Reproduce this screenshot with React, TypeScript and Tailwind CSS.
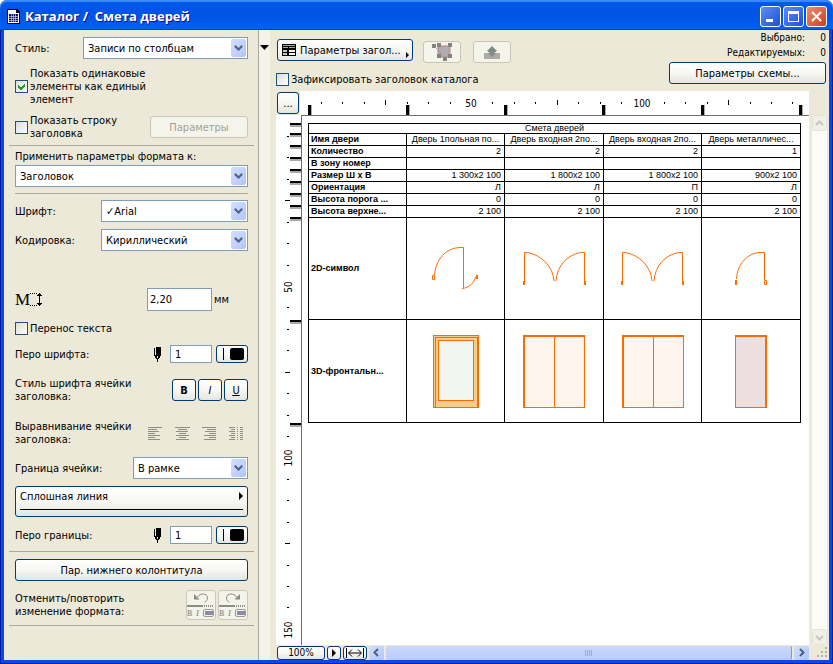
import React from 'react';
import clsx from 'clsx';

const PUSH =
  'rounded-[3px] border border-[#003c74] bg-linear-to-b from-white via-[#f7f7f4] to-[#e6e5dc] text-black';
const PUSH_OFF = 'rounded-[3px] border border-[#c9c7ba] bg-[#f5f4ea] text-[#a1a192]';
const FIELD = 'border border-[#7f9db9] bg-white text-black outline-none';

interface SelectProps {
  id: string;
  options: string[];
  className: string;
}

const Select: React.FC<SelectProps> = ({ id, options, className }) => (
  <div className={clsx('grid', className)}>
    <select
      id={id}
      className={clsx(FIELD, 'col-start-1 row-start-1 h-[22px] w-full appearance-none pl-1 pr-5')}
    >
      {options.map((o) => (
        <option key={o}>{o}</option>
      ))}
    </select>
    <span className="pointer-events-none col-start-1 row-start-1 mr-0.5 flex h-[18px] w-[15px] items-center justify-center self-center justify-self-end rounded-[2px] bg-linear-to-br from-[#d3dffd] to-[#b0c5f8]">
      <svg width="9" height="6" viewBox="0 0 9 6" fill="none" stroke="#4d6185" strokeWidth="2">
        <path d="M0.8 0.8 4.5 4.5 8.2 0.8" />
      </svg>
    </span>
  </div>
);

interface CheckProps {
  checked?: boolean;
  children: React.ReactNode;
  className?: string;
}

const Check: React.FC<CheckProps> = ({ checked, children, className }) => (
  <label className={clsx('flex items-center gap-0.5', className)}>
    <span className="grid shrink-0">
      <input
        type="checkbox"
        defaultChecked={checked}
        className="peer col-start-1 row-start-1 size-[13px] appearance-none border border-[#1c5180] bg-linear-to-br from-[#dcdcd7] to-white"
      />
      <svg
        className="pointer-events-none invisible col-start-1 row-start-1 peer-checked:visible"
        width="13"
        height="13"
        viewBox="0 0 13 13"
        shapeRendering="crispEdges"
      >
        <path d="M3 5v3l2 2h1l4-4V3L5.5 7.5z" fill="#21a121" />
      </svg>
    </span>
    <span>{children}</span>
  </label>
);

const PenIcon = () => (
  <svg width="9" height="15" viewBox="0 0 9 15" shapeRendering="crispEdges">
    <path d="M1 1h1v7h1V0h5v9H7v2H6v1H5v3H4v-3H3v-1H2V9H1z" fill="#000" />
    <path d="M4 9h1v2H4z" fill="#ece9d8" />
  </svg>
);

const PenRow: React.FC<{ id: string; label: string }> = ({ id, label }) => (
  <div className="flex items-center">
    <label htmlFor={id} className="flex-1">
      {label}
    </label>
    <PenIcon />
    <input id={id} defaultValue="1" className={clsx(FIELD, 'ml-2 h-[18px] w-[42px] pl-1')} />
    <button className={clsx(PUSH, 'ml-1 flex h-[18px] w-8 items-center gap-1.5 pl-1.5')} aria-label="Цвет пера">
      <span className="h-3 w-px bg-black" />
      <span className="h-3 w-3.5 rounded-[2px] bg-black" />
    </button>
  </div>
);

const ALIGN_ICONS = [
  'M0 .5h14M0 2.5h9M0 4.5h11M0 6.5h7M0 8.5h12M0 10.5h7M0 12.5h12',
  'M0 .5h15M3 2.5h9M1 4.5h12M4 6.5h7M1 8.5h13M4 10.5h7M1 12.5h13',
  'M0 .5h14M5 2.5h9M3 4.5h11M7 6.5h7M2 8.5h12M7 10.5h7M2 12.5h12',
  'M0 .5h6M8 .5h1M11 .5h3M2 2.5h4M8 2.5h1M11 2.5h3M0 4.5h6M8 4.5h1M11 4.5h3M2 6.5h4M8 6.5h1M11 6.5h3M0 8.5h6M8 8.5h1M11 8.5h3M2 10.5h4M8 10.5h1M11 10.5h3M0 12.5h6M8 12.5h1M11 12.5h3',
];
const ALIGN_LABELS = ['По левому краю', 'По центру', 'По правому краю', 'По ширине'];

const HistoryIcon: React.FC<{ redo?: boolean }> = ({ redo }) => (
  <svg width="28" height="28" viewBox="0 0 28 28" fill="none">
    <g transform={redo ? 'translate(28 0) scale(-1 1)' : undefined}>
      <path d="M10 6.5C13 1.5 20.5 2 20.5 7c0 2-1 3.500-3 4" stroke="#8c8c86" />
      <path d="M7 3v5.500h5.500z" fill="#8c8c86" />
    </g>
    <path d="M0 15h15" stroke="#8c8c86" strokeWidth="2" />
    <path d="M15 15h12" stroke="#8c8c86" strokeWidth="2" strokeDasharray="1 1" />
    <text x="0" y="25" fontSize="8" fontWeight="bold" fill="#9b9b94" fontFamily="Liberation Serif, serif">
      B
    </text>
    <text x="9" y="25" fontSize="8" fontWeight="bold" fontStyle="italic" fill="#9b9b94" fontFamily="Liberation Serif, serif">
      I
    </text>
    <rect x="16.5" y="18.5" width="10" height="7" rx="1.5" stroke="#9b9b94" />
    <rect x="18" y="20" width="8" height="4" fill="#8a8ab0" />
  </svg>
);

const Rule: React.FC<{ className?: string }> = ({ className }) => (
  <hr className={clsx('border-[#aca899]', className)} />
);

const FormatPanel = () => (
  <aside className="w-[254px] shrink-0 pl-[11px] pr-2.5">
    <div className="flex items-center justify-between pt-[7px]">
      <label htmlFor="style">Стиль:</label>
      <Select id="style" options={['Записи по столбцам']} className="w-[165px]" />
    </div>
    <Check checked className="mt-2 w-[150px]">
      Показать одинаковые элементы как единый элемент
    </Check>
    <div className="mt-2 flex items-center justify-between">
      <Check className="w-[120px]">Показать строку заголовка</Check>
      <button disabled className={clsx(PUSH_OFF, 'h-[22px] w-[98px]')}>
        Параметры
      </button>
    </div>
    <Rule className="-ml-1.5 -mr-1.5 mt-[5px]" />

    <label htmlFor="target" className="mt-1 block">
      Применить параметры формата к:
    </label>
    <Select id="target" options={['Заголовок']} className="mt-0.5 w-full" />
    <Rule className="mt-1.5" />

    <div className="mt-1.5 flex items-center justify-between">
      <label htmlFor="font">Шрифт:</label>
      <Select id="font" options={['✓Arial']} className="w-[147px]" />
    </div>
    <div className="mt-[7px] flex items-center justify-between">
      <label htmlFor="enc">Кодировка:</label>
      <Select id="enc" options={['Кириллический']} className="w-[147px]" />
    </div>

    <div className="mt-[37px] flex items-center">
      <span className="font-['Liberation_Serif',serif] text-[17px] leading-5">M</span>
      <svg width="12" height="13" viewBox="0 0 12 13" shapeRendering="crispEdges">
        <path d="M0 .5h7M0 12.5h7" stroke="#000" strokeDasharray="1 1" />
        <path d="M9 0h1v1h1v1h1v1h-2v7h2v1h-1v1h-1v1H9v-1H8v-1H7v-1h2V3H7V2h1V1h1z" fill="#000" />
      </svg>
      <input aria-label="Высота шрифта" defaultValue="2,20" className={clsx(FIELD, 'ml-auto h-[23px] w-[65px] pl-0.5')} />
      <span className="w-9 pl-0.5">мм</span>
    </div>
    <Check className="mt-[11px]">Перенос текста</Check>
    <div className="mt-2.5">
      <PenRow id="fontpen" label="Перо шрифта:" />
    </div>

    <div className="mt-3.5 flex items-center justify-between">
      <span className="w-[130px]">Стиль шрифта ячейки заголовка:</span>
      <div className="flex gap-0.5">
        <button className={clsx(PUSH, 'h-[22px] w-6 font-bold')}>B</button>
        <button className={clsx(PUSH, 'h-[22px] w-6 italic')}>I</button>
        <button className={clsx(PUSH, 'h-[22px] w-6 underline')}>U</button>
      </div>
    </div>

    <div className="mt-[17px] flex items-center justify-between">
      <span className="w-[130px]">Выравнивание ячейки заголовка:</span>
      <div className="flex gap-3 pr-1">
        {ALIGN_ICONS.map((d, i) => (
          <button key={d} disabled aria-label={ALIGN_LABELS[i]}>
            <svg width="15" height="13" viewBox="0 0 15 13" stroke="#8f8e85" shapeRendering="crispEdges">
              <path d={d} />
            </svg>
          </button>
        ))}
      </div>
    </div>

    <div className="mt-[11px] flex items-center justify-between">
      <label htmlFor="border">Граница ячейки:</label>
      <Select id="border" options={['В рамке']} className="w-[115px]" />
    </div>
    <button className={clsx(PUSH, 'mt-[7px] block h-[31px] w-full px-1')}>
      <span className="flex items-center justify-between">
        Сплошная линия
        <svg width="4" height="8" viewBox="0 0 4 8">
          <path d="M0 0 4 4 0 8z" />
        </svg>
      </span>
      <span className="mb-1 mt-1.5 block h-px bg-black" />
    </button>
    <div className="mt-[9px]">
      <PenRow id="borderpen" label="Перо границы:" />
    </div>
    <Rule className="-ml-1.5 -mr-1.5 mt-[7px]" />

    <button className={clsx(PUSH, 'mt-[7px] h-[22px] w-full')}>Пар. нижнего колонтитула</button>
    <div className="mt-[9px] flex items-center justify-between">
      <span className="w-[130px]">Отменить/повторить изменение формата:</span>
      <div className="flex gap-0.5">
        <button disabled aria-label="Отменить" className={PUSH_OFF}>
          <HistoryIcon />
        </button>
        <button disabled aria-label="Повторить" className={PUSH_OFF}>
          <HistoryIcon redo />
        </button>
      </div>
    </div>
    <Rule className="-ml-1.5 -mr-1.5 mt-[5px]" />
  </aside>
);

const ORANGE = '#ff6a00';

const SinglePlan = () => (
  <svg width="47" height="43" viewBox="0 0 47 43" fill="none" stroke={ORANGE}>
    <path d="M.5 28.5h2v4h-2zM2.5 28C4 12 14 1 28 .5h3.5v40.500M30 41.5C37 41 42 36 43.5 30" />
    <path d="M45 28v4" strokeWidth="2" />
  </svg>
);

const DoublePlan = () => (
  <svg width="63" height="33" viewBox="0 0 63 33" fill="none" stroke={ORANGE}>
    <path d="M1.5 30V.5h3C18 3 30 14 31 29M61.5 30V.5h-4C44 3 34 14 33 29" />
    <path d="M1 29v4M62 29v4" strokeWidth="2" />
  </svg>
);

const MetalPlan = () => (
  <svg width="32" height="33" viewBox="0 0 32 33" fill="none" stroke={ORANGE}>
    <path d="M1.5 27C2 13 12 1 25 .5h4.5V28M29.5 28.5h2v4h-2z" />
    <path d="M1 28v5" strokeWidth="2" />
  </svg>
);

const WindowFront = () => (
  <svg width="46" height="73" viewBox="0 0 46 73" stroke={ORANGE} shapeRendering="crispEdges">
    <rect x=".5" y=".5" width="45" height="72" fill="#f5cd8a" />
    <path d="M2.5 72V2.5h42V72" fill="none" />
    <rect x="5.5" y="5.5" width="35" height="60" fill="#f0f5f0" />
  </svg>
);

const DoubleFront = () => (
  <svg width="62" height="73" viewBox="0 0 62 73" stroke={ORANGE} shapeRendering="crispEdges">
    <rect x=".5" y=".5" width="61" height="72" fill="#fff5ef" />
    <path d="M0 1.5h62M1.5 0v73M31.5 0v73" />
  </svg>
);

const MetalFront = () => (
  <svg width="32" height="73" viewBox="0 0 32 73" stroke={ORANGE} shapeRendering="crispEdges">
    <rect x=".5" y=".5" width="31" height="72" fill="#ebe0df" />
    <path d="M0 1.5h32M30.5 0v73" />
  </svg>
);

const ROWS = [
  ['Количество', '2', '2', '2', '1'],
  ['В зону номер', '', '', '', ''],
  ['Размер Ш x В', '1 300x2 100', '1 800x2 100', '1 800x2 100', '900x2 100'],
  ['Ориентация', 'Л', 'Л', 'П', 'Л'],
  ['Высота порога ...', '0', '0', '0', '0'],
  ['Высота верхне...', '2 100', '2 100', '2 100', '2 100'],
];
const DOORS = ['Дверь 1польная по...', 'Дверь входная 2по...', 'Дверь входная 2по...', 'Дверь металличес...'];
const PLANS = [SinglePlan, DoublePlan, DoublePlan, MetalPlan];
const FRONTS = [WindowFront, DoubleFront, DoubleFront, MetalFront];

const TH = 'border border-black p-0 pl-0.5 text-left font-bold whitespace-nowrap';
const TD = 'border border-black p-0 pr-[3px] text-right whitespace-nowrap';

const Schedule = () => (
  <table className="w-[493px] table-fixed border-collapse font-['Liberation_Sans',sans-serif] text-[9px] leading-[11px]">
    <colgroup>
      <col className="w-[98px]" />
      <col className="w-[98px]" />
      <col className="w-[99px]" />
      <col className="w-[98px]" />
      <col />
    </colgroup>
    <thead>
      <tr>
        <th colSpan={5} className="border border-black p-0 text-center leading-[9px] font-normal">
          Смета дверей
        </th>
      </tr>
      <tr>
        <th className={TH}>Имя двери</th>
        {DOORS.map((d, i) => (
          <th key={i} className="border border-black p-0 text-center font-normal whitespace-nowrap">
            {d}
          </th>
        ))}
      </tr>
    </thead>
    <tbody>
      {ROWS.map(([name, ...values]) => (
        <tr key={name} className="h-3">
          <th className={TH}>{name}</th>
          {values.map((v, i) => (
            <td key={i} className={TD}>
              {v}
            </td>
          ))}
        </tr>
      ))}
      <tr className="h-[102px]">
        <th className={TH}>2D-символ</th>
        {PLANS.map((Plan, i) => (
          <td key={i} className="border border-black p-0">
            <div className="flex justify-center">
              <Plan />
            </div>
          </td>
        ))}
      </tr>
      <tr className="h-[103px]">
        <th className={TH}>3D-фронтальн...</th>
        {FRONTS.map((Front, i) => (
          <td key={i} className="border border-black p-0">
            <div className="flex justify-center">
              <Front />
            </div>
          </td>
        ))}
      </tr>
    </tbody>
  </table>
);

// one tick per 6.25 units, a number on every 8th, a longer tick half way between
const ticks = (first: number, count: number, offset: number) =>
  Array.from({ length: count }, (_, i) => {
    const n = i + offset;
    return { pos: Math.round(first + i * 21.43), long: n % 8 === 4, num: n % 8 === 0 ? (n / 8) * 50 : 0 };
  });

const COL_MARKS = [9, 107, 205, 303, 402, 500];
const ROW_MARKS = [8, 18, 30, 42, 54, 66, 78, 90, 102, 205, 308];

const RulerX = () => (
  <svg width="509" height="24" shapeRendering="crispEdges" fontSize="10" textAnchor="middle" className="block">
    {ticks(21, 23, 1).map((t) =>
      t.num ? (
        <text key={t.pos} x={t.pos} y="16">
          {t.num}
        </text>
      ) : (
        <rect key={t.pos} x={t.pos} y={t.long ? 9 : 11} width="1" height={t.long ? 5 : 2} />
      ),
    )}
    {COL_MARKS.map((x) => (
      <g key={x}>
        <rect x={x} y="14" width="3" height="10" fill="#aaa" />
        <rect x={x - 1} y="14" width="3" height="10" />
      </g>
    ))}
  </svg>
);

const RulerY = () => (
  <svg width="25" height="525" shapeRendering="crispEdges" fontSize="10" textAnchor="middle" className="block">
    {ticks(21, 24, 1).map((t) =>
      t.num ? (
        <text key={t.pos} transform={`translate(16 ${t.pos + 1}) rotate(-90)`}>
          {t.num}
        </text>
      ) : (
        <rect key={t.pos} x={t.long ? 9 : 11} y={t.pos} width={t.long ? 5 : 2} height="1" />
      ),
    )}
    {ROW_MARKS.map((y) => (
      <g key={y}>
        <rect x="14" y={y + 2} width="11" height="2" fill="#aaa" />
        <rect x="14" y={y} width="11" height="2" />
      </g>
    ))}
  </svg>
);

const Toolbar = () => (
  <div className="flex justify-between pr-[3px]">
    <div className="pl-1.5 pt-[9px]">
      <div className="flex items-start pl-px">
        <button className={clsx(PUSH, 'flex h-[22px] w-[136px] items-center gap-1 pl-1 pr-[3px]')}>
          <svg width="14" height="12" viewBox="0 0 14 12" shapeRendering="crispEdges" className="shrink-0">
            <path d="M0 0h14v12H0z" />
            <path d="M1 1h12v1H1zM1 3h5v1H1zM7 3h6v1H7z" fill="#aaa" />
            <path d="M1 6h4v2H1zM1 9h4v2H1z" fill="#c4c4be" />
            <path d="M7 6h6v2H7zM7 9h6v2H7z" fill="#f4f4f0" />
          </svg>
          <span className="whitespace-nowrap">Параметры загол...</span>
          <svg width="3" height="6" viewBox="0 0 3 6" className="mb-0.5 ml-auto self-end">
            <path d="M0 0 3 3 0 6z" />
          </svg>
        </button>
        <button disabled aria-label="Показать выбранное" className={clsx(PUSH_OFF, 'ml-2.5 mt-0.5 flex h-[22px] w-[38px] items-center justify-center')}>
          <svg width="22" height="18" viewBox="0 0 22 18">
            <rect x="7" y="3" width="12" height="11" fill="#adadad" stroke="#c98080" />
            <path d="M3 3 11 11" stroke="#8c8ccc" strokeDasharray="2 1" />
            <path d="M1 1h4v4H1zM6 0h4v4H6zM17 0h4v4h-4zM6 11h4v4H6zM17 11h4v4h-4zM12 14h4v4h-4z" fill="#84847e" />
          </svg>
        </button>
        <button disabled aria-label="Показать в 3D" className={clsx(PUSH_OFF, 'ml-3 mt-0.5 flex h-[22px] w-[38px] items-center justify-center')}>
          <svg width="16" height="13" viewBox="0 0 16 13">
            <path d="M0 7h16v6H0z" fill="#aaaaa6" />
            <path d="M8 0 13 5 10 7H6L3 5z" fill="#7f8c84" />
            <path d="M4 7h8L8 11z" fill="#8b8b87" />
          </svg>
        </button>
      </div>
      <Check className="mt-2.5">Зафиксировать заголовок каталога</Check>
    </div>
    <div className="flex flex-col items-end text-[10px]">
      <p className="flex leading-[15px]">
        Выбрано:<span className="w-[21px] text-right">0</span>
      </p>
      <p className="flex leading-[15px]">
        Редактируемых:<span className="w-[21px] text-right">0</span>
      </p>
      <button className={clsx(PUSH, 'mt-0.5 h-[22px] w-[157px] text-[11px]')}>Параметры схемы...</button>
    </div>
  </div>
);

const Chevron: React.FC<{ d: string; color: string }> = ({ d, color }) => (
  <svg width="9" height="9" viewBox="0 0 9 9" fill="none" stroke={color} strokeWidth="2">
    <path d={d} />
  </svg>
);

const SCROLL_OFF = 'flex h-4 w-full items-center justify-center rounded-[2px] border border-[#e6e4d6] bg-[#f1f0e8]';
const SCROLL_ON =
  'flex h-3.5 w-[15px] shrink-0 items-center justify-center rounded-[2px] bg-linear-to-br from-[#d3dffd] to-[#b0c5f8]';

const Viewer = () => (
  <main className="flex min-w-0 flex-1 flex-col">
    <Toolbar />
    <div className="mt-[5px] flex flex-1">
      <div className="ml-1.5 flex min-w-0 flex-1 flex-col">
        <div className="flex h-6">
          <div className="w-6 shrink-0 bg-[#ece9d8] pl-px pt-px">
            <button className={clsx(PUSH, 'h-[22px] w-[22px]')}>...</button>
          </div>
          <div className="min-w-0 flex-1 overflow-hidden bg-white">
            <RulerX />
          </div>
        </div>
        <div className="flex flex-1 bg-white">
          <div className="w-[25px] shrink-0">
            <RulerY />
          </div>
          <div className="min-w-0 flex-1 overflow-hidden border-l border-t border-[#716f64] pl-1.5 pt-[7px]">
            <Schedule />
          </div>
        </div>
      </div>
      <div className="mt-6 flex w-5 shrink-0 flex-col justify-between pl-[3px] pr-0.5">
        <div className="flex flex-1 flex-col justify-between bg-[#fdfdf8]">
          <button disabled aria-label="Вверх" className={SCROLL_OFF}>
            <Chevron d="M1 6 4.5 2.5 8 6" color="#c9c7ba" />
          </button>
          <button disabled aria-label="Вниз" className={SCROLL_OFF}>
            <Chevron d="M1 3 4.5 6.5 8 3" color="#c9c7ba" />
          </button>
        </div>
      </div>
    </div>
    <div className="flex h-[15px] items-center gap-0.5 pl-[7px] text-[10px] leading-3">
      <button className={clsx(PUSH, 'h-3.5 w-12 shrink-0')}>100%</button>
      <button className={clsx(PUSH, 'flex h-3.5 w-3.5 shrink-0 items-center justify-center')} aria-label="Масштаб">
        <svg width="4" height="8" viewBox="0 0 4 8">
          <path d="M0 0 4 4 0 8z" />
        </svg>
      </button>
      <button className={clsx(PUSH, 'flex h-3.5 w-6 shrink-0 items-center justify-center')} aria-label="По ширине окна">
        <svg width="18" height="10" viewBox="0 0 18 10" fill="none" stroke="#000">
          <path d="M.5 0v10M17.5 0v10M3 5h12M6 1.5 2.5 5 6 8.5M12 1.5 15.5 5 12 8.5" />
        </svg>
      </button>
      <button className={SCROLL_ON} aria-label="Влево">
        <Chevron d="M6 1 2.5 4.5 6 8" color="#4d6185" />
      </button>
      <div className="flex h-3.5 flex-1 items-center justify-center gap-px rounded-[2px] border-r border-[#7d9bd8] bg-linear-to-b from-[#cad8fd] to-[#b9cdfa]">
        {[0, 1, 2, 3].map((i) => (
          <span key={i} className="h-1.5 w-px bg-[#8fa9ea]" />
        ))}
      </div>
      <button className={SCROLL_ON} aria-label="Вправо">
        <Chevron d="M3 1 6.5 4.5 3 8" color="#4d6185" />
      </button>
      <svg width="18" height="12" viewBox="0 0 18 12" className="shrink-0">
        <path
          d="M14 0h2v2h-2zM10 4h2v2h-2zM14 4h2v2h-2zM6 8h2v2H6zM10 8h2v2h-2zM14 8h2v2h-2z"
          fill="#b8b4a3"
        />
      </svg>
    </div>
  </main>
);

const CAPTION = 'flex size-[21px] items-center justify-center rounded-[3px] border border-white';

const TitleBar = () => (
  <header className="flex h-[30px] items-center rounded-t-[7px] bg-linear-to-b from-[#0058ee] via-[#0054e3] to-[#0061fc] pl-[7px] pr-1.5 pt-0.5 shadow-[inset_0_2px_1px_#3c8cf8,inset_0_-1px_#0043cf]">
    <svg width="13" height="15" viewBox="0 0 13 15" shapeRendering="crispEdges">
      <path d="M0 0h10l3 3v12H0z" />
      <path d="M1 1h8v3h3v10H1z" fill="#fff" />
      <path d="M2 5h9v8H2z" fill="#101060" />
      <path d="M2 7.5h9M2 9.5h9M2 11.5h9M4.5 5v8M6.5 5v8M8.5 5v8" stroke="#fff" strokeWidth=".5" />
    </svg>
    <h1 className="ml-[5px] flex-1 whitespace-pre font-['Open_Sans','Noto_Sans',sans-serif] text-[13px] font-bold text-white [text-shadow:1px_1px_#0f1089]">
      {'Каталог /  Смета дверей'}
    </h1>
    <div className="flex gap-0.5">
      <button aria-label="Свернуть" className={clsx(CAPTION, 'bg-linear-to-br from-[#5d8df5] to-[#1c4fd8]')}>
        <svg width="13" height="13" viewBox="0 0 13 13">
          <path d="M2 9h7v3H2z" fill="#fff" />
        </svg>
      </button>
      <button aria-label="Развернуть" className={clsx(CAPTION, 'bg-linear-to-br from-[#5d8df5] to-[#1c4fd8]')}>
        <svg width="13" height="13" viewBox="0 0 13 13" shapeRendering="crispEdges">
          <path d="M1 1h11v11H1zM2 4v7h9V4z" fill="#fff" fillRule="evenodd" />
        </svg>
      </button>
      <button aria-label="Закрыть" className={clsx(CAPTION, 'bg-linear-to-br from-[#ee8a6c] to-[#d03a12]')}>
        <svg width="13" height="13" viewBox="0 0 13 13" stroke="#fff" strokeWidth="2">
          <path d="M2 2 11 11M11 2 2 11" />
        </svg>
      </button>
    </div>
  </header>
);

const App = () => (
  <div className="flex min-h-screen flex-col bg-white font-['DejaVu_Sans_Condensed','Noto_Sans',sans-serif] text-[11px] leading-[13px] text-black">
    <TitleBar />
    <div className="flex flex-1 border-x border-b border-[#001ea0]">
      <div className="flex min-w-0 flex-1 border-x-3 border-b-3 border-[#0a4ae4] bg-[#ece9d8]">
        <FormatPanel />
        <div className="w-3 shrink-0 border-l border-[#aca899] bg-[#f4f3ea] pt-[15px]">
          <button aria-label="Свернуть панель" className="block pl-px">
            <svg width="9" height="5" viewBox="0 0 9 5">
              <path d="M0 0h9L4.5 5z" />
            </svg>
          </button>
        </div>
        <Viewer />
      </div>
    </div>
  </div>
);

export default App;
